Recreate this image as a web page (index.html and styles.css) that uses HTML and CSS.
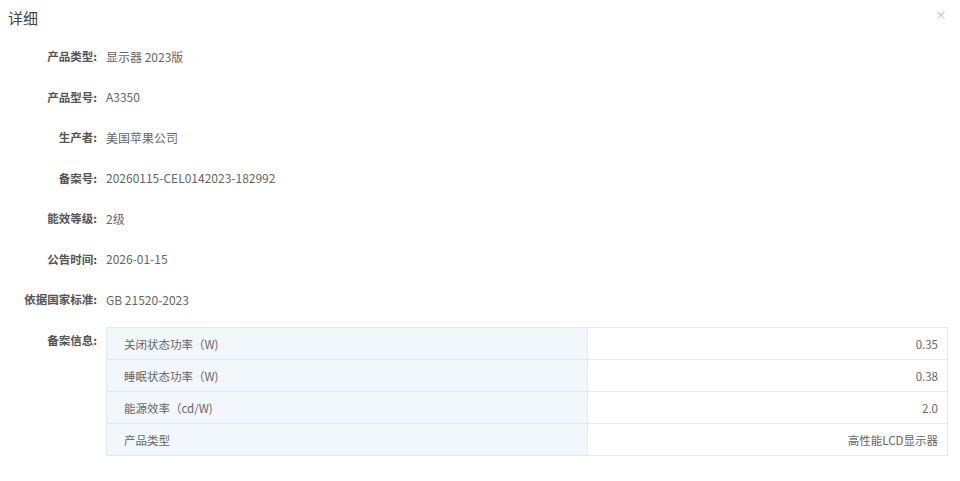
FILE: index.html
```html
<!DOCTYPE html>
<html lang="zh-CN">
<head>
  <meta charset="UTF-8">
  <meta name="viewport" content="width=device-width, initial-scale=1.0">
  <title>详细</title>
  <link rel="stylesheet" href="styles.css">
</head>
<body>
  <div class="dialog">
    <div class="dialog-header">
      <span class="dialog-title">详细</span>
      <span class="dialog-close">&#215;</span>
    </div>

    <div class="rows">
      <div class="row"><span class="label">产品类型:</span><span class="value">显示器 2023版</span></div>
      <div class="row"><span class="label">产品型号:</span><span class="value">A3350</span></div>
      <div class="row"><span class="label">生产者:</span><span class="value">美国苹果公司</span></div>
      <div class="row"><span class="label">备案号:</span><span class="value">20260115-CEL0142023-182992</span></div>
      <div class="row"><span class="label">能效等级:</span><span class="value">2级</span></div>
      <div class="row"><span class="label">公告时间:</span><span class="value">2026-01-15</span></div>
      <div class="row"><span class="label">依据国家标准:</span><span class="value">GB 21520-2023</span></div>
      <div class="row row-table">
        <span class="label">备案信息:</span>
        <table class="info">
          <tr><td class="key">关闭状态功率（W)</td><td class="val">0.35</td></tr>
          <tr><td class="key">睡眠状态功率（W)</td><td class="val">0.38</td></tr>
          <tr><td class="key">能源效率（cd/W)</td><td class="val">2.0</td></tr>
          <tr><td class="key">产品类型</td><td class="val">高性能LCD显示器</td></tr>
        </table>
      </div>
    </div>
  </div>
</body>
</html>
```

FILE: styles.css
```css
body { margin: 0; background: #fff; font-family: "Noto Sans CJK SC", "Noto Sans", sans-serif; color: #666; }
.dialog { width: 960px; height: 481px; }
.dialog-header { display: flex; justify-content: space-between; align-items: center; height: 36px; padding: 0 13px 0 8px; box-sizing: border-box; }
.dialog-title { font-size: 15px; color: #444; line-height: 20px; }
.dialog-close { font-size: 12px; color: #c0c0c0; margin-top: -7px; }
.row { display: flex; align-items: center; height: 40.5px; font-size: 11.5px; }
.label { width: 97px; text-align: right; font-weight: bold; color: #555; flex: none; }
.value { margin-left: 9px; font-size: 12px; }
.row-table { align-items: flex-start; height: auto; padding-top: 7.5px; }
.row-table .label { line-height: 26px; }
.info { margin-left: 9px; width: 842px; border-collapse: collapse; font-size: 11.5px; }
.info td { border: 1px solid #e4e9ef; height: 31px; padding: 0; }
.info .key { width: 463px; padding-left: 17px; background: #f2f7fc; color: #666; }
.info .val { text-align: right; padding-right: 9px; color: #666; }
```
